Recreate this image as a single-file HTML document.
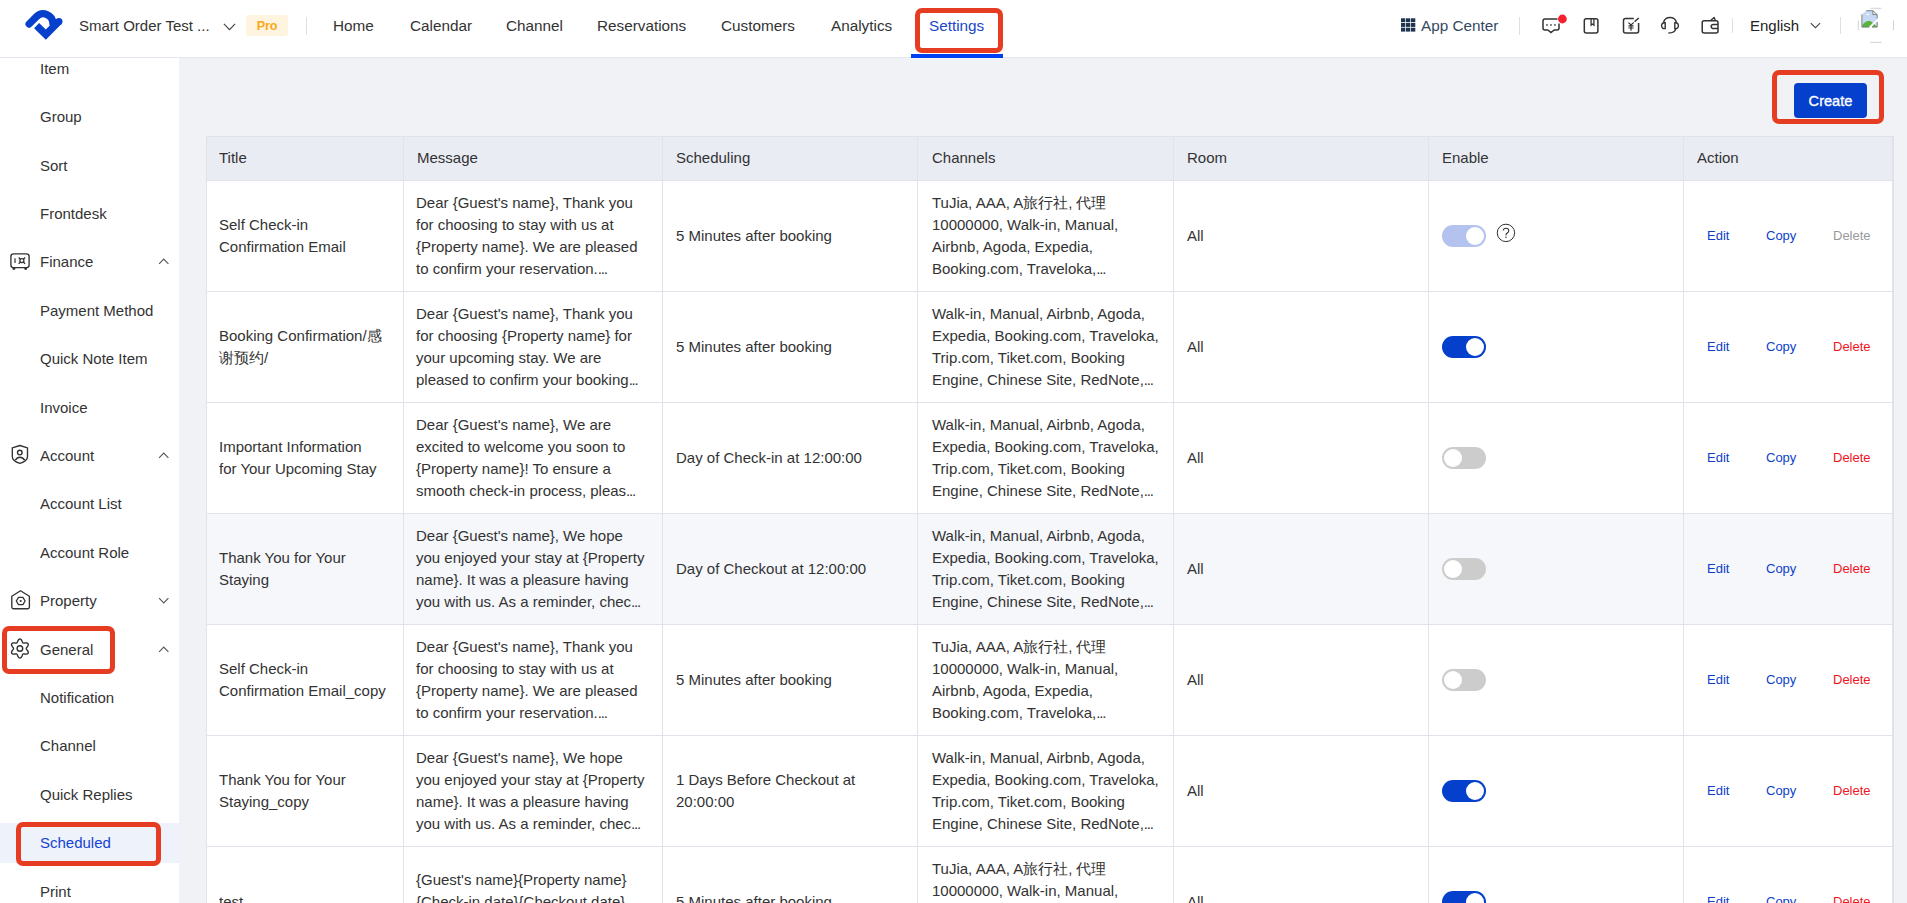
<!DOCTYPE html><html><head><meta charset="utf-8"><style>
*{box-sizing:border-box;margin:0;padding:0}
html,body{width:1907px;height:903px;overflow:hidden}
body{position:relative;background:#f0f2f6;font-family:"Liberation Sans", sans-serif;color:#333;font-size:15px}
.a{position:absolute;white-space:nowrap}
#hdr{position:absolute;left:0;top:0;width:1907px;height:58px;background:#fff;border-bottom:1px solid #e3e6ec}
#side{position:absolute;left:0;top:58px;width:179px;height:845px;background:#fff}
.nav{position:absolute;top:16px;height:20px;line-height:20px;font-size:15.3px;color:#333}
.sep{position:absolute;width:1px;background:#dcdfe6}
.si{position:absolute;left:40px;height:20px;line-height:20px;font-size:15px;color:#333;white-space:nowrap}
.red{position:absolute;border:5px solid #e63c22;border-radius:7px}
table{position:absolute;left:206px;top:136px;border-collapse:collapse;table-layout:fixed;background:#fff}
td,th{border:1px solid #e0e3ea;font-weight:normal;text-align:left;vertical-align:middle;font-size:15px;line-height:22px;color:#333;padding:0 13px;overflow:hidden}
th{background:#e9ecf3;height:44px}
td{height:111px}
.clamp{display:-webkit-box;-webkit-line-clamp:4;-webkit-box-orient:vertical;overflow:hidden;word-break:normal}
.tg{position:absolute;display:block;width:44px;height:22px;border-radius:11px;vertical-align:middle}
.tg i{position:absolute;top:2px;width:18px;height:18px;border-radius:50%;background:#fff}
.on{background:#0440cc} .on i{left:24px}
.off{background:#cccccc} .off i{left:2px}
.dis{background:#b3c3ee} .dis i{left:24px}
.act{font-size:13px;line-height:20px;color:#0b3fc9}
.el{letter-spacing:-1.2px}
.cell{position:absolute;white-space:nowrap;font-size:15px;line-height:22px;color:#333}
</style></head><body>
<div id="hdr">
<svg class="a" style="left:20px;top:5px" width="50" height="40" viewBox="20 5 50 40">
<path d="M29.1 24.07 L36.51 16.66 A9.6 9.6 0 0 1 52.9 23.45" fill="none" stroke="#0740cc" stroke-width="7.2" stroke-linecap="round"/>
<path d="M36.6 25.6 L45.8 34.6 L58.9 21.5" fill="none" stroke="#0740cc" stroke-width="7.2" stroke-linecap="butt" stroke-linejoin="miter"/>
<circle cx="58.9" cy="21.5" r="3.6" fill="#0740cc"/>
</svg>
<div class="nav" style="left:79px;font-size:15px">Smart Order Test ...</div>
<svg class="a" style="left:220px;top:20px" width="18" height="14" viewBox="220 20 18 14"><path d="M223.9 23.8 L229.5 29.6 L235.1 23.8" fill="none" stroke="#444" stroke-width="1.15"/></svg>
<div class="a" style="left:246px;top:15px;width:42px;height:21px;background:#fff4df;border-radius:3px;color:#f8a81a;font-size:12.6px;font-weight:bold;letter-spacing:-0.2px;line-height:23px;text-align:center">Pro</div>
<div class="sep" style="left:306px;top:17px;height:18px"></div>
<div class="nav" style="left:333px;color:#333">Home</div>
<div class="nav" style="left:410px;color:#333">Calendar</div>
<div class="nav" style="left:506px;color:#333">Channel</div>
<div class="nav" style="left:597px;color:#333">Reservations</div>
<div class="nav" style="left:721px;color:#333">Customers</div>
<div class="nav" style="left:831px;color:#333">Analytics</div>
<div class="nav" style="left:929px;color:#1a47c8">Settings</div>
<div class="a" style="left:911px;top:54px;width:92px;height:4px;background:#0040f5"></div>
<div class="red" style="left:915px;top:8px;width:88px;height:45px"></div>
<svg class="a" style="left:1400px;top:16px" width="18" height="18" viewBox="1400 16 18 18" fill="#1e3450"><rect x="1401.0" y="18.3" width="4.3" height="3.9"/><rect x="1406.0" y="18.3" width="4.3" height="3.9"/><rect x="1411.0" y="18.3" width="4.3" height="3.9"/><rect x="1401.0" y="23.0" width="4.3" height="3.9"/><rect x="1406.0" y="23.0" width="4.3" height="3.9"/><rect x="1411.0" y="23.0" width="4.3" height="3.9"/><rect x="1401.0" y="27.7" width="4.3" height="3.9"/><rect x="1406.0" y="27.7" width="4.3" height="3.9"/><rect x="1411.0" y="27.7" width="4.3" height="3.9"/></svg>
<div class="nav" style="left:1421px;color:#34495f">App Center</div>
<div class="sep" style="left:1519px;top:17px;height:18px"></div>
<svg class="a" style="left:1535px;top:10px" width="70" height="30" viewBox="1535 10 70 30">
<path d="M1557.5 19 H1545 a2 2 0 0 0 -2 2 V28 a2 2 0 0 0 2 2 h2.8 l3.2 2.6 l3.2 -2.6 h2.8 a2 2 0 0 0 2 -2 V23.6" fill="none" stroke="#333" stroke-width="1.5"/>
<rect x="1546.2" y="24.2" width="1.5" height="1.5" fill="#333"/><rect x="1550.2" y="24.2" width="1.5" height="1.5" fill="#333"/><rect x="1554.2" y="24.2" width="1.5" height="1.5" fill="#333"/>
<circle cx="1562.4" cy="19" r="4.4" fill="#f5202d"/>
<rect x="1584.3" y="18.7" width="13.6" height="14.4" rx="2" fill="none" stroke="#333" stroke-width="1.5"/>
<path d="M1591.1 18.7 V25.2 L1592.5 24 L1593.9 25.2 V18.7" fill="none" stroke="#333" stroke-width="1.3"/>
</svg>
<svg class="a" style="left:1615px;top:10px" width="70" height="30" viewBox="1615 10 70 30">
<path d="M1633.8 18.4 H1625.5 a2 2 0 0 0 -2 2 V31.1 a2 2 0 0 0 2 2 H1636.6 a2 2 0 0 0 2 -2 V23" fill="none" stroke="#333" stroke-width="1.5"/>
<path d="M1634.6 21.8 L1638.7 18" fill="none" stroke="#333" stroke-width="1.5"/>
<path d="M1632.8 23.2 L1634.2 21.8" fill="none" stroke="#999" stroke-width="0.8"/>
<path d="M1628.4 22.6 L1631 25 L1633.6 22.6 M1631 25 V30.8 M1628.4 25.9 H1633.6 M1628.4 28 H1633.6" fill="none" stroke="#333" stroke-width="1.2"/>
<path d="M1663.5 22.5 C1664.5 18.5 1667 17.5 1670 17.5 C1673 17.5 1675.5 18.5 1676.5 22.5" fill="none" stroke="#333" stroke-width="1.5"/>
<path d="M1665.2 22.8 C1662.8 22.4 1661.6 23.8 1661.6 25.7 C1661.6 27.6 1662.8 29 1665.2 28.6 Z" fill="none" stroke="#333" stroke-width="1.4"/>
<path d="M1674.8 22.8 C1677.2 22.4 1678.4 23.8 1678.4 25.7 C1678.4 27.6 1677.2 29 1674.8 28.6 Z" fill="none" stroke="#333" stroke-width="1.4"/>
<path d="M1675.6 29 C1675.2 31.6 1673.2 33 1668.4 33" fill="none" stroke="#333" stroke-width="1.5"/>
</svg>
<svg class="a" style="left:1695px;top:10px" width="35" height="30" viewBox="1695 10 35 30">
<rect x="1702.2" y="20.7" width="15.8" height="12.3" rx="2" fill="none" stroke="#333" stroke-width="1.5"/>
<path d="M1710.6 20.5 L1714.1 17.5 L1715.4 20.5" fill="none" stroke="#333" stroke-width="1.4" stroke-linejoin="round"/>
<path d="M1718 24.4 H1713.3 a2.1 2.1 0 0 0 0 4.2 H1718" fill="none" stroke="#333" stroke-width="1.5"/>
</svg>
<div class="sep" style="left:1732px;top:18px;height:15px"></div>
<div class="nav" style="left:1750px;color:#222;font-size:15px">English</div>
<svg class="a" style="left:1805px;top:18px" width="20" height="14" viewBox="1805 18 20 14"><path d="M1810.8 23.1 L1815.45 27.7 L1820.1 23.1" fill="none" stroke="#444" stroke-width="1.05"/></svg>
<div class="sep" style="left:1840px;top:17px;height:17px"></div>
<svg class="a" style="left:1850px;top:0px" width="57" height="50" viewBox="1850 0 57 50">
<path d="M1870.2 8.3 H1881.6 M1870.2 42.4 H1881.6 M1858.3 20.5 V30.2 M1893.5 20.5 V30.2" stroke="#b4b4b4" stroke-width="0.6"/>
<path d="M1861.9 14.4 L1866.3 10.7 H1872.9 L1877.2 14.7 V27.1 H1861.9 Z" fill="#c6d9f4"/>
<path d="M1861.9 27.1 C1863 22 1867 20.5 1870.5 21 L1873.5 23.5 L1877.2 27.1 Z" fill="#5bb33c"/>
<path d="M1866 15 L1867.5 13.2 L1869.3 15 Z" fill="#fff"/>
<path d="M1868.2 27.4 L1877.4 18.8 V21 L1871 27.4 Z" fill="#fff"/>
<path d="M1872.9 10.7 V14.6 H1877.2" fill="#f4f4f4" stroke="#777" stroke-width="0.9"/>
<path d="M1866.3 10.7 H1872.9 L1877.2 14.7 V18.6 M1877.2 22 V27.1 H1872 M1869.5 27.1 H1861.9 V14.4" fill="none" stroke="#777" stroke-width="0.9"/>
</svg>
</div>
<div id="side">
</div>
<div style="position:absolute;left:0;top:0">
<div class="si" style="top:59px;color:#333">Item</div>
<div class="si" style="top:107px;color:#333">Group</div>
<div class="si" style="top:156px;color:#333">Sort</div>
<div class="si" style="top:204px;color:#333">Frontdesk</div>
<div class="si" style="top:252px;color:#333">Finance</div>
<svg class="a" style="left:150px;top:242px" width="30" height="30" viewBox="150 242 30 30"><path d="M159.1 263.9 L163.75 259.1 L168.4 263.9" fill="none" stroke="#555" stroke-width="1.1"/></svg>
<div class="si" style="top:301px;color:#333">Payment Method</div>
<div class="si" style="top:349px;color:#333">Quick Note Item</div>
<div class="si" style="top:398px;color:#333">Invoice</div>
<div class="si" style="top:446px;color:#333">Account</div>
<svg class="a" style="left:150px;top:436px" width="30" height="30" viewBox="150 436 30 30"><path d="M159.1 457.9 L163.75 453.1 L168.4 457.9" fill="none" stroke="#555" stroke-width="1.1"/></svg>
<div class="si" style="top:494px;color:#333">Account List</div>
<div class="si" style="top:543px;color:#333">Account Role</div>
<div class="si" style="top:591px;color:#333">Property</div>
<svg class="a" style="left:150px;top:581px" width="30" height="30" viewBox="150 581 30 30"><path d="M159.1 598.1 L163.75 602.9 L168.4 598.1" fill="none" stroke="#555" stroke-width="1.1"/></svg>
<div class="si" style="top:640px;color:#333">General</div>
<svg class="a" style="left:150px;top:630px" width="30" height="30" viewBox="150 630 30 30"><path d="M159.1 651.9 L163.75 647.1 L168.4 651.9" fill="none" stroke="#555" stroke-width="1.1"/></svg>
<div class="si" style="top:688px;color:#333">Notification</div>
<div class="si" style="top:736px;color:#333">Channel</div>
<div class="si" style="top:785px;color:#333">Quick Replies</div>
<div class="a" style="left:0;top:823px;width:179px;height:40px;background:#eef2fb"></div>
<div class="si" style="top:833px;color:#1443d2">Scheduled</div>
<div class="si" style="top:882px;color:#333">Print</div>
<svg class="a" style="left:0;top:240px" width="40" height="440" viewBox="0 240 40 440">
<rect x="10.9" y="253.8" width="18.2" height="13.8" rx="2.6" fill="none" stroke="#333" stroke-width="1.35"/>
<path d="M12.3 267.8 a1.6 2.3 0 0 0 3.2 0 Z M24.1 267.8 a1.6 2.3 0 0 0 3.2 0 Z" fill="#333"/>
<path d="M15 258.3 v4.7" stroke="#333" stroke-width="1.2"/>
<path d="M18.7 257.5 L25.1 263.7 M25.1 257.5 L18.7 263.7" stroke="#333" stroke-width="1.3"/>
<circle cx="21.9" cy="260.6" r="2" fill="#fff" stroke="#333" stroke-width="1.3"/>
<path d="M19.9 445.5 L27.5 447.9 V456.5 C27.5 459.5 24.5 462 19.9 463.4 C15.3 462 12.3 459.5 12.3 456.5 V447.9 Z" fill="none" stroke="#333" stroke-width="1.35" stroke-linejoin="round"/>
<circle cx="19.8" cy="452.6" r="2.3" fill="none" stroke="#333" stroke-width="1.4"/>
<path d="M15.3 460.2 C16.5 458.2 18 457.2 19.9 457.2 C21.8 457.2 23.3 458.2 24.6 460.2" fill="none" stroke="#333" stroke-width="1.4"/>
<path d="M20.5 590.8 L29.4 596.3 V607 a1.7 1.7 0 0 1 -1.7 1.7 H13.5 a1.7 1.7 0 0 1 -1.7 -1.7 V596.3 Z" fill="none" stroke="#333" stroke-width="1.35" stroke-linejoin="round"/>
<path d="M18.5 597.3 H22.9 L25.1 601 L22.9 604.7 H18.5 L16.3 601 Z" fill="none" stroke="#333" stroke-width="1.3" stroke-linejoin="round"/>
<circle cx="20.7" cy="601" r="1.1" fill="#333"/>
<path d="M26.25 648.50 L26.32 648.84 L26.51 649.19 L26.80 649.59 L27.16 650.04 L27.53 650.54 L27.87 651.09 L28.13 651.66 L28.26 652.22 L28.25 652.76 L28.08 653.23 L27.76 653.61 L27.31 653.88 L26.75 654.04 L26.13 654.11 L25.49 654.09 L24.87 654.01 L24.30 653.93 L23.81 653.88 L23.40 653.89 L23.07 654.00 L22.82 654.23 L22.60 654.57 L22.40 655.02 L22.19 655.56 L21.94 656.13 L21.64 656.70 L21.28 657.20 L20.86 657.60 L20.39 657.86 L19.90 657.95 L19.41 657.86 L18.94 657.60 L18.52 657.20 L18.16 656.70 L17.86 656.13 L17.61 655.56 L17.40 655.02 L17.20 654.57 L16.98 654.23 L16.73 654.00 L16.40 653.89 L15.99 653.88 L15.50 653.93 L14.93 654.01 L14.31 654.09 L13.67 654.11 L13.05 654.04 L12.49 653.88 L12.04 653.61 L11.72 653.23 L11.55 652.76 L11.54 652.22 L11.67 651.66 L11.93 651.09 L12.27 650.54 L12.64 650.04 L13.00 649.59 L13.29 649.19 L13.48 648.84 L13.55 648.50 L13.48 648.16 L13.29 647.81 L13.00 647.41 L12.64 646.96 L12.27 646.46 L11.93 645.91 L11.67 645.34 L11.54 644.78 L11.55 644.24 L11.72 643.77 L12.04 643.39 L12.49 643.12 L13.05 642.96 L13.67 642.89 L14.31 642.91 L14.93 642.99 L15.50 643.07 L15.99 643.12 L16.40 643.11 L16.72 643.00 L16.98 642.77 L17.20 642.43 L17.40 641.98 L17.61 641.44 L17.86 640.87 L18.16 640.30 L18.52 639.80 L18.94 639.40 L19.41 639.14 L19.90 639.05 L20.39 639.14 L20.86 639.40 L21.28 639.80 L21.64 640.30 L21.94 640.87 L22.19 641.44 L22.40 641.98 L22.60 642.43 L22.82 642.77 L23.07 643.00 L23.40 643.11 L23.81 643.12 L24.30 643.07 L24.87 642.99 L25.49 642.91 L26.13 642.89 L26.75 642.96 L27.31 643.12 L27.76 643.39 L28.08 643.77 L28.25 644.24 L28.26 644.78 L28.13 645.34 L27.87 645.91 L27.53 646.46 L27.16 646.96 L26.80 647.41 L26.51 647.81 L26.32 648.16 L26.25 648.50Z" fill="none" stroke="#333" stroke-width="1.4"/>
<circle cx="19.9" cy="648.5" r="2.8" fill="none" stroke="#333" stroke-width="1.4"/>
</svg>
</div>
<div class="a" style="left:1794px;top:83px;width:73px;height:35px;background:#0440cc;border-radius:4px;color:#fff;font-size:14.6px;-webkit-text-stroke:0.35px #fff;line-height:36px;text-align:center">Create</div>
<div class="red" style="left:1772px;top:70px;width:112px;height:54px"></div>
<div class="a" style="left:206px;top:136px;width:1688px;height:45px;background:#e9ecf3;border:1px solid #e0e3ea"></div>
<div class="cell" style="left:219px;top:147px">Title</div>
<div class="cell" style="left:417px;top:147px">Message</div>
<div class="cell" style="left:676px;top:147px">Scheduling</div>
<div class="cell" style="left:932px;top:147px">Channels</div>
<div class="cell" style="left:1187px;top:147px">Room</div>
<div class="cell" style="left:1442px;top:147px">Enable</div>
<div class="cell" style="left:1697px;top:147px">Action</div>
<div class="a" style="left:206px;top:180px;width:1688px;height:112px;background:#fff;border:1px solid #e0e3ea"></div>
<div class="cell" style="left:219px;top:213.5px">Self Check-in<br>Confirmation Email</div>
<div class="cell" style="left:416px;top:191.5px">Dear {Guest&#x27;s name}, Thank you<br>for choosing to stay with us at<br>{Property name}. We are pleased<br>to confirm your reservation.<span class="el">...</span></div>
<div class="cell" style="left:676px;top:224.5px">5 Minutes after booking</div>
<div class="cell" style="left:932px;top:191.5px">TuJia, AAA, A旅行社, 代理<br>10000000, Walk-in, Manual,<br>Airbnb, Agoda, Expedia,<br>Booking.com, Traveloka,<span class="el">...</span></div>
<div class="cell" style="left:1187px;top:224.5px">All</div>
<span class="tg dis a" style="left:1442px;top:225px"><i></i></span>
<svg class="a" style="left:1496px;top:223px" width="20" height="20" viewBox="0 0 20 20"><circle cx="9.95" cy="9.9" r="8.7" fill="none" stroke="#333" stroke-width="1"/><path d="M7.2 7.6 C7.2 6.1 8.4 5.3 9.95 5.3 C11.6 5.3 12.8 6.3 12.8 7.7 C12.8 9.1 11.8 9.6 10.9 10.3 C10.2 10.8 9.95 11.3 9.95 12.6" fill="none" stroke="#333" stroke-width="1.05"/><circle cx="9.95" cy="14.3" r="0.75" fill="#333"/></svg>
<div class="act a" style="left:1707px;top:226px">Edit</div>
<div class="act a" style="left:1766px;top:226px">Copy</div>
<div class="act a" style="left:1833px;top:226px;color:#999">Delete</div>
<div class="a" style="left:206px;top:291px;width:1688px;height:112px;background:#fff;border:1px solid #e0e3ea"></div>
<div class="cell" style="left:219px;top:324.5px">Booking Confirmation/感<br>谢预约/</div>
<div class="cell" style="left:416px;top:302.5px">Dear {Guest&#x27;s name}, Thank you<br>for choosing {Property name} for<br>your upcoming stay. We are<br>pleased to confirm your booking<span class="el">...</span></div>
<div class="cell" style="left:676px;top:335.5px">5 Minutes after booking</div>
<div class="cell" style="left:932px;top:302.5px">Walk-in, Manual, Airbnb, Agoda,<br>Expedia, Booking.com, Traveloka,<br>Trip.com, Tiket.com, Booking<br>Engine, Chinese Site, RedNote,<span class="el">...</span></div>
<div class="cell" style="left:1187px;top:335.5px">All</div>
<span class="tg on a" style="left:1442px;top:336px"><i></i></span>
<div class="act a" style="left:1707px;top:337px">Edit</div>
<div class="act a" style="left:1766px;top:337px">Copy</div>
<div class="act a" style="left:1833px;top:337px;color:#f0141e">Delete</div>
<div class="a" style="left:206px;top:402px;width:1688px;height:112px;background:#fff;border:1px solid #e0e3ea"></div>
<div class="cell" style="left:219px;top:435.5px">Important Information<br>for Your Upcoming Stay</div>
<div class="cell" style="left:416px;top:413.5px">Dear {Guest&#x27;s name}, We are<br>excited to welcome you soon to<br>{Property name}! To ensure a<br>smooth check-in process, pleas<span class="el">...</span></div>
<div class="cell" style="left:676px;top:446.5px">Day of Check-in at 12:00:00</div>
<div class="cell" style="left:932px;top:413.5px">Walk-in, Manual, Airbnb, Agoda,<br>Expedia, Booking.com, Traveloka,<br>Trip.com, Tiket.com, Booking<br>Engine, Chinese Site, RedNote,<span class="el">...</span></div>
<div class="cell" style="left:1187px;top:446.5px">All</div>
<span class="tg off a" style="left:1442px;top:447px"><i></i></span>
<div class="act a" style="left:1707px;top:448px">Edit</div>
<div class="act a" style="left:1766px;top:448px">Copy</div>
<div class="act a" style="left:1833px;top:448px;color:#f0141e">Delete</div>
<div class="a" style="left:206px;top:513px;width:1688px;height:112px;background:#f5f7fb;border:1px solid #e0e3ea"></div>
<div class="cell" style="left:219px;top:546.5px">Thank You for Your<br>Staying</div>
<div class="cell" style="left:416px;top:524.5px">Dear {Guest&#x27;s name}, We hope<br>you enjoyed your stay at {Property<br>name}. It was a pleasure having<br>you with us. As a reminder, chec<span class="el">...</span></div>
<div class="cell" style="left:676px;top:557.5px">Day of Checkout at 12:00:00</div>
<div class="cell" style="left:932px;top:524.5px">Walk-in, Manual, Airbnb, Agoda,<br>Expedia, Booking.com, Traveloka,<br>Trip.com, Tiket.com, Booking<br>Engine, Chinese Site, RedNote,<span class="el">...</span></div>
<div class="cell" style="left:1187px;top:557.5px">All</div>
<span class="tg off a" style="left:1442px;top:558px"><i></i></span>
<div class="act a" style="left:1707px;top:559px">Edit</div>
<div class="act a" style="left:1766px;top:559px">Copy</div>
<div class="act a" style="left:1833px;top:559px;color:#f0141e">Delete</div>
<div class="a" style="left:206px;top:624px;width:1688px;height:112px;background:#fff;border:1px solid #e0e3ea"></div>
<div class="cell" style="left:219px;top:657.5px">Self Check-in<br>Confirmation Email_copy</div>
<div class="cell" style="left:416px;top:635.5px">Dear {Guest&#x27;s name}, Thank you<br>for choosing to stay with us at<br>{Property name}. We are pleased<br>to confirm your reservation.<span class="el">...</span></div>
<div class="cell" style="left:676px;top:668.5px">5 Minutes after booking</div>
<div class="cell" style="left:932px;top:635.5px">TuJia, AAA, A旅行社, 代理<br>10000000, Walk-in, Manual,<br>Airbnb, Agoda, Expedia,<br>Booking.com, Traveloka,<span class="el">...</span></div>
<div class="cell" style="left:1187px;top:668.5px">All</div>
<span class="tg off a" style="left:1442px;top:669px"><i></i></span>
<div class="act a" style="left:1707px;top:670px">Edit</div>
<div class="act a" style="left:1766px;top:670px">Copy</div>
<div class="act a" style="left:1833px;top:670px;color:#f0141e">Delete</div>
<div class="a" style="left:206px;top:735px;width:1688px;height:112px;background:#fff;border:1px solid #e0e3ea"></div>
<div class="cell" style="left:219px;top:768.5px">Thank You for Your<br>Staying_copy</div>
<div class="cell" style="left:416px;top:746.5px">Dear {Guest&#x27;s name}, We hope<br>you enjoyed your stay at {Property<br>name}. It was a pleasure having<br>you with us. As a reminder, chec<span class="el">...</span></div>
<div class="cell" style="left:676px;top:768.5px">1 Days Before Checkout at<br>20:00:00</div>
<div class="cell" style="left:932px;top:746.5px">Walk-in, Manual, Airbnb, Agoda,<br>Expedia, Booking.com, Traveloka,<br>Trip.com, Tiket.com, Booking<br>Engine, Chinese Site, RedNote,<span class="el">...</span></div>
<div class="cell" style="left:1187px;top:779.5px">All</div>
<span class="tg on a" style="left:1442px;top:780px"><i></i></span>
<div class="act a" style="left:1707px;top:781px">Edit</div>
<div class="act a" style="left:1766px;top:781px">Copy</div>
<div class="act a" style="left:1833px;top:781px;color:#f0141e">Delete</div>
<div class="a" style="left:206px;top:846px;width:1688px;height:112px;background:#fff;border:1px solid #e0e3ea"></div>
<div class="cell" style="left:219px;top:890.5px">test</div>
<div class="cell" style="left:416px;top:868.5px">{Guest&#x27;s name}{Property name}<br>{Check-in date}{Checkout date}<br>{Room type}</div>
<div class="cell" style="left:676px;top:890.5px">5 Minutes after booking</div>
<div class="cell" style="left:932px;top:857.5px">TuJia, AAA, A旅行社, 代理<br>10000000, Walk-in, Manual,<br>Airbnb, Agoda, Expedia,<br>Booking.com, Traveloka,<span class="el">...</span></div>
<div class="cell" style="left:1187px;top:890.5px">All</div>
<span class="tg on a" style="left:1442px;top:891px"><i></i></span>
<div class="act a" style="left:1707px;top:892px">Edit</div>
<div class="act a" style="left:1766px;top:892px">Copy</div>
<div class="act a" style="left:1833px;top:892px;color:#f0141e">Delete</div>
<div class="a" style="left:403px;top:136px;width:1px;height:767px;background:#e0e3ea"></div>
<div class="a" style="left:662px;top:136px;width:1px;height:767px;background:#e0e3ea"></div>
<div class="a" style="left:917px;top:136px;width:1px;height:767px;background:#e0e3ea"></div>
<div class="a" style="left:1173px;top:136px;width:1px;height:767px;background:#e0e3ea"></div>
<div class="a" style="left:1428px;top:136px;width:1px;height:767px;background:#e0e3ea"></div>
<div class="a" style="left:1683px;top:136px;width:1px;height:767px;background:#e0e3ea"></div>
<div class="a" style="left:1892px;top:136px;width:2px;height:767px;background:#dfe2ea"></div>
<div class="red" style="left:2px;top:626px;width:113px;height:48px"></div>
<div class="red" style="left:16px;top:822px;width:145px;height:44px"></div>
</body></html>
